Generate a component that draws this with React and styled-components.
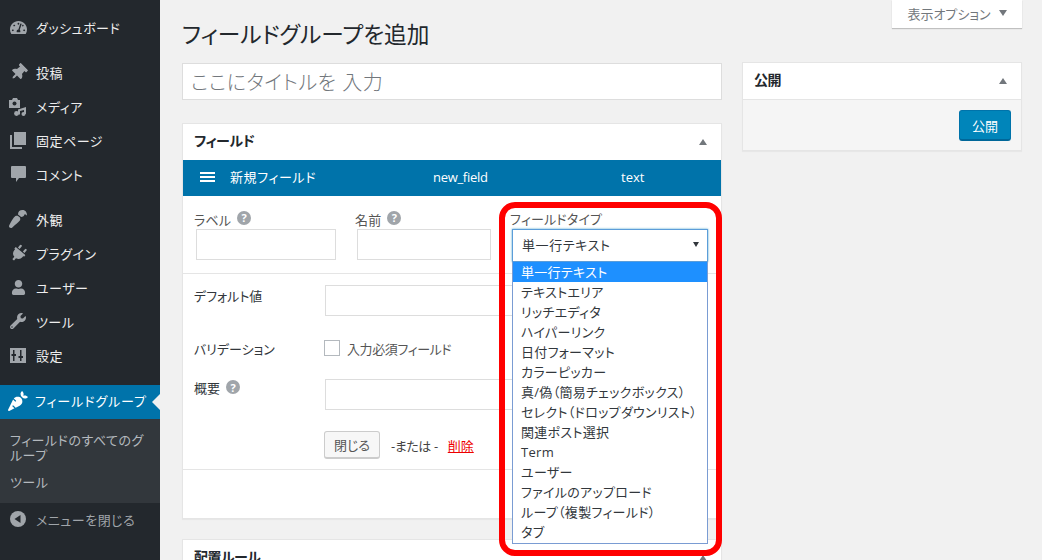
import React from "react";
import styled, { createGlobalStyle } from "styled-components";
import {
  FaTachometerAlt,
  FaThumbtack,
  FaPaintBrush,
  FaPlug,
  FaUser,
  FaWrench,
  FaCarrot,
} from "react-icons/fa";

const PinIcon = styled.span`
  display: flex;
  transform: rotate(45deg);
`;

const BrushIcon = styled.span`
  display: flex;
  transform: rotate(180deg);
`;

const PlugIcon = styled.span`
  display: flex;
  transform: rotate(40deg);
`;

const MediaIcon = () => (
  <svg width="19" height="19" viewBox="0 0 19 19" fill="currentColor">
    <path d="M0 3h3l1-2h4l1 2h2v8H0z" />
    <circle cx="5.5" cy="6.500" r="2" fill="#23282d" />
    <path d="M9 12.500l8-2.500v7h-2v-4l-4 1v3.500H9z" />
    <circle cx="7.500" cy="16.500" r="2.400" />
    <circle cx="14.500" cy="17" r="2" />
  </svg>
);

const PagesIcon = () => (
  <svg width="16" height="17" viewBox="0 0 16 17" fill="currentColor">
    <path d="M4 0h12v13H4z" />
    <path d="M2 3v12h10v2H0V3z" />
  </svg>
);

const CommentIcon = () => (
  <svg width="15" height="16" viewBox="0 0 15 16" fill="currentColor">
    <path d="M1 0h13a1 1 0 0 1 1 1v10a1 1 0 0 1-1 1H8l-3 4v-4H1a1 1 0 0 1-1-1V1a1 1 0 0 1 1-1z" />
  </svg>
);

const SettingsIcon = () => (
  <svg width="16" height="15" viewBox="0 0 16 15">
    <path fill="currentColor" d="M0 0h16v15H0z" />
    <path fill="#23282d" d="M3 2h1.500v4H6v2H4.500v5H3V8H1.500V6H3zM10 2h1.500v6H13v2h-1.500v3H10v-3H8.500V8H10z" />
  </svg>
);

const CollapseIcon = () => (
  <svg width="16" height="16" viewBox="0 0 16 16">
    <circle cx="8" cy="8" r="8" fill="currentColor" />
    <path fill="#23282d" d="M10.500 4v8L4.500 8z" />
  </svg>
);

const menuTop = [
  { label: "ダッシュボード", icon: <FaTachometerAlt size={17} /> },
];
const menuContent = [
  { label: "投稿", icon: <PinIcon><FaThumbtack size={17} /></PinIcon> },
  { label: "メディア", icon: <MediaIcon /> },
  { label: "固定ページ", icon: <PagesIcon /> },
  { label: "コメント", icon: <CommentIcon /> },
];
const menuAdmin = [
  { label: "外観", icon: <BrushIcon><FaPaintBrush size={18} /></BrushIcon> },
  { label: "プラグイン", icon: <PlugIcon><FaPlug size={17} /></PlugIcon> },
  { label: "ユーザー", icon: <FaUser size={15} /> },
  { label: "ツール", icon: <FaWrench size={16} /> },
  { label: "設定", icon: <SettingsIcon /> },
];

const fieldTypes = [
  "単一行テキスト",
  "テキストエリア",
  "リッチエディタ",
  "ハイパーリンク",
  "日付フォーマット",
  "カラーピッカー",
  "真/偽（簡易チェックボックス）",
  "セレクト（ドロップダウンリスト）",
  "関連ポスト選択",
  "Term",
  "ユーザー",
  "ファイルのアップロード",
  "ループ（複製フィールド）",
  "タブ",
];

function MenuGroup({ items }) {
  return (
    <MenuList>
      {items.map((item) => (
        <MenuItem key={item.label}>
          <MenuIcon>{item.icon}</MenuIcon>
          {item.label}
        </MenuItem>
      ))}
    </MenuList>
  );
}

export default function App() {
  return (
    <Page>
      <GlobalStyle />
      <Sidebar>
        <MenuGroup items={menuTop} />
        <MenuGroup items={menuContent} />
        <MenuGroup items={menuAdmin} />
        <ActiveItem>
          <MenuIcon>
            <FaCarrot size={20} />
          </MenuIcon>
          フィールドグループ
        </ActiveItem>
        <SubMenu>
          <SubItem>フィールドのすべてのグループ</SubItem>
          <SubItem>ツール</SubItem>
        </SubMenu>
        <CollapseRow>
          <MenuIcon>
            <CollapseIcon />
          </MenuIcon>
          メニューを閉じる
        </CollapseRow>
      </Sidebar>

      <Main>
        <ScreenOptions>
          表示オプション
          <Caret $down $inline />
        </ScreenOptions>
        <Columns>
          <Primary>
            <PageTitle>フィールドグループを追加</PageTitle>
            <TitleInput>ここにタイトルを 入力</TitleInput>

            <Card>
              <CardHead>
                フィールド
                <Caret />
              </CardHead>
              <FieldBar>
                <Burger>
                  <i />
                  <i />
                  <i />
                </Burger>
                <FieldName>新規フィールド</FieldName>
                <FieldSlug>new_field</FieldSlug>
                <span>text</span>
              </FieldBar>

              <TopRow>
                <LabelCol>
                  <SmallLabel>
                    ラベル <Help>?</Help>
                  </SmallLabel>
                  <TextBox />
                </LabelCol>
                <NameCol>
                  <SmallLabel>
                    名前 <Help>?</Help>
                  </SmallLabel>
                  <TextBox />
                </NameCol>
                <TypeCol>
                  <TypeLabel>フィールドタイプ</TypeLabel>
                  <SelectBox>
                    単一行テキスト
                    <SelectArrow />
                  </SelectBox>
                  <Options>
                    {fieldTypes.map((type, index) => (
                      <Option key={type} $selected={index === 0}>
                        {type}
                      </Option>
                    ))}
                  </Options>
                  <Ring />
                </TypeCol>
              </TopRow>

              <FormBlock>
                <FormRow>
                  <RowLabel>デフォルト値</RowLabel>
                  <WideBox />
                </FormRow>
                <CheckRow>
                  <RowLabel>バリデーション</RowLabel>
                  <CheckLabel>
                    <CheckBox />
                    入力必須フィールド
                  </CheckLabel>
                </CheckRow>
                <SummaryRow>
                  <SummaryLabel>
                    概要 <Help>?</Help>
                  </SummaryLabel>
                  <WideBox />
                </SummaryRow>
                <ActionRow>
                  <CloseButton>閉じる</CloseButton>
                  <OrText>-または -</OrText>
                  <DeleteLink>削除</DeleteLink>
                </ActionRow>
              </FormBlock>

              <CardFoot>
                <AddButton />
              </CardFoot>
            </Card>

            <Card>
              <CardHead>
                配置ルール
                <Caret />
              </CardHead>
            </Card>
          </Primary>

          <Secondary>
            <Card>
              <CardHead>
                公開
                <Caret />
              </CardHead>
              <PublishFoot>
                <PublishButton>公開</PublishButton>
              </PublishFoot>
            </Card>
          </Secondary>
        </Columns>
      </Main>
    </Page>
  );
}

const GlobalStyle = createGlobalStyle`
  html, body {
    margin: 0;
    height: 100%;
    overflow: hidden;
    background: #f1f1f1;
  }
  body {
    font-family: "Open Sans", "Noto Sans CJK JP", sans-serif;
    font-size: 13px;
    font-feature-settings: "palt";
    color: #32373c;
  }
`;

const Page = styled.div`
  display: flex;
  width: 1042px;
  height: 560px;
  overflow: hidden;
`;

const Sidebar = styled.nav`
  flex: none;
  width: 160px;
  height: 560px;
  padding-top: 11px;
  box-sizing: border-box;
  background: #23282d;
  color: #eee;
  letter-spacing: 0.5px;
`;

const MenuList = styled.div`
  margin-bottom: 11px;

  &:nth-child(3) {
    margin-bottom: 12px;
  }
`;

const MenuItem = styled.div`
  display: flex;
  align-items: center;
  height: 34px;
  padding: 0 0 2px 8px;
  box-sizing: border-box;
  font-size: 13px;
  white-space: nowrap;
`;

const MenuIcon = styled.span`
  display: flex;
  align-items: center;
  justify-content: center;
  flex: none;
  width: 20px;
  margin-right: 8px;
  color: #a0a5aa;
`;

const ActiveItem = styled(MenuItem)`
  position: relative;
  padding-bottom: 3px;
  background: #0073aa;
  color: #fff;
  letter-spacing: 0.9px;

  ${MenuIcon} {
    margin-right: 7px;
    color: #fff;
  }

  &::after {
    content: "";
    position: absolute;
    right: 0;
    top: 9px;
    border: 8px solid transparent;
    border-right-color: #f1f1f1;
    border-left-width: 0;
  }
`;

const SubMenu = styled.div`
  display: flex;
  flex-direction: column;
  gap: 12px;
  height: 84px;
  padding: 14px 12px 0 10px;
  box-sizing: border-box;
  background: #32373c;
  color: #b4b9be;
  font-size: 13px;
  line-height: 15px;
`;

const SubItem = styled.div``;

const CollapseRow = styled(MenuItem)`
  color: #a0a5aa;
`;

const Main = styled.main`
  position: relative;
  flex: 1;
  padding: 0 20px 0 22px;
`;

const ScreenOptions = styled.div`
  position: absolute;
  top: 0;
  right: 20px;
  display: flex;
  align-items: center;
  justify-content: center;
  gap: 8px;
  width: 130px;
  height: 28px;
  padding-bottom: 2px;
  box-sizing: border-box;
  background: #fff;
  box-shadow: 0 1px 1px rgba(0, 0, 0, 0.2);
  color: #72777c;
  font-size: 13px;
`;

const Caret = styled.span`
  position: ${(p) => (p.$inline ? "static" : "absolute")};
  right: 14px;
  top: 15px;
  width: 0;
  height: 0;
  border-left: 4px solid transparent;
  border-right: 4px solid transparent;
  border-bottom: ${(p) => (p.$down ? "0" : "6px solid #72777c")};
  border-top: ${(p) => (p.$down ? "6px solid #72777c" : "0")};
`;

const Columns = styled.div`
  display: flex;
  gap: 20px;
  align-items: flex-start;
`;

const Primary = styled.div`
  flex: none;
  width: 540px;
`;

const Secondary = styled.div`
  flex: none;
  width: 280px;
  padding-top: 62px;
`;

const PageTitle = styled.h1`
  height: 63px;
  margin: 0;
  padding-top: 20px;
  box-sizing: border-box;
  color: #23282d;
  font-size: 22.7px;
  font-weight: 400;
  line-height: 29px;
`;

const TitleInput = styled.div`
  display: flex;
  align-items: center;
  height: 37px;
  margin-bottom: 23px;
  padding-left: 8px;
  box-sizing: border-box;
  border: 1px solid #ddd;
  background: #fff;
  color: #72777c;
  font-size: 20px;
  font-weight: 300;
  letter-spacing: 0.5px;
`;

const Card = styled.section`
  margin-bottom: 20px;
  border: 1px solid #e5e5e5;
  background: #fff;
  box-shadow: 0 1px 1px rgba(0, 0, 0, 0.04);
`;

const CardHead = styled.h2`
  position: relative;
  display: flex;
  align-items: center;
  height: 36px;
  margin: 0;
  padding: 0 0 4px 11px;
  box-sizing: border-box;
  color: #23282d;
  font-size: 14px;
  font-weight: 700;
  letter-spacing: -0.5px;
`;

const FieldBar = styled.div`
  display: flex;
  align-items: center;
  height: 36px;
  padding: 0 0 3px 17px;
  box-sizing: border-box;
  background: #0073aa;
  color: #fff;
  font-size: 13px;
`;

const Burger = styled.span`
  display: flex;
  flex-direction: column;
  gap: 2px;
  width: 15px;
  margin-right: 15px;

  i {
    display: block;
    height: 2px;
    background: #fff;
  }
`;

const FieldName = styled.span`
  width: 203px;
  letter-spacing: 0.6px;
`;

const FieldSlug = styled.span`
  width: 188px;
  font-weight: 500;
  letter-spacing: -0.3px;
`;

const TopRow = styled.div`
  display: flex;
  height: 78px;
  padding: 12px 0 0 11px;
  box-sizing: border-box;
  border-bottom: 1px solid #e5e5e5;
`;

const LabelCol = styled.div`
  width: 161px;
  padding-top: 1px;
`;

const NameCol = styled(LabelCol)`
  width: 155px;
`;

const SmallLabel = styled.div`
  display: flex;
  align-items: center;
  gap: 6px;
  height: 20px;
  color: #555;
  font-size: 13px;
  letter-spacing: 0.2px;
`;

const Help = styled.span`
  display: inline-flex;
  align-items: center;
  justify-content: center;
  width: 14px;
  height: 14px;
  margin-top: -3px;
  border-radius: 50%;
  background: #a0a5aa;
  color: #fff;
  font-size: 11px;
  font-weight: 700;
  line-height: 1;
`;

const TextBox = styled.div`
  width: 140px;
  height: 31px;
  margin: 0 0 0 2px;
  box-sizing: border-box;
  border: 1px solid #ddd;
  background: #fff;

  ${NameCol} & {
    width: 134px;
  }
`;

const TypeCol = styled.div`
  position: relative;
  z-index: 2;
  width: 198px;
`;

const TypeLabel = styled.div`
  height: 20px;
  margin-top: 2px;
  color: #555;
  font-size: 13px;
  line-height: 18px;
  letter-spacing: 0.2px;
`;

const SelectBox = styled.div`
  position: relative;
  display: flex;
  align-items: center;
  height: 33px;
  margin: -1px 0 0 2px;
  padding: 0 0 2px 9px;
  box-sizing: border-box;
  border: 1px solid #5b9dd9;
  box-shadow: 0 0 2px rgba(30, 140, 190, 0.8);
  background: #fff;
  color: #32373c;
  letter-spacing: 0.6px;
`;

const SelectArrow = styled.span`
  position: absolute;
  right: 8px;
  top: 12px;
  border-left: 3px solid transparent;
  border-right: 3px solid transparent;
  border-top: 5px solid #32373c;
`;

const Options = styled.ul`
  position: absolute;
  left: 2px;
  top: 54px;
  width: 196px;
  margin: 0;
  padding: 0 0 1px;
  box-sizing: border-box;
  list-style: none;
  border: 1px solid #7a9cd3;
  border-top: 0;
  background: #fff;
`;

const Option = styled.li`
  height: 20px;
  padding-left: 8px;
  background: ${(p) => (p.$selected ? "#1e90ff" : "#fff")};
  color: ${(p) => (p.$selected ? "#fff" : "#32373c")};
  font-size: 13px;
  line-height: 20px;
  letter-spacing: 0.3px;
  white-space: nowrap;
`;

const Ring = styled.div`
  position: absolute;
  left: -11px;
  top: -6px;
  width: 223px;
  height: 354px;
  box-sizing: border-box;
  border: 6px solid #f00;
  border-radius: 16px;
  pointer-events: none;
`;

const FormBlock = styled.div`
  padding: 11px 0 0 11px;
  height: 196px;
  box-sizing: border-box;
  border-bottom: 1px solid #e5e5e5;
`;

const FormRow = styled.div`
  display: flex;
  align-items: flex-start;
`;

const RowLabel = styled.div`
  display: flex;
  align-items: center;
  gap: 6px;
  flex: none;
  width: 131px;
  height: 20px;
  color: #32373c;
  font-size: 13px;
`;

const SummaryLabel = styled(RowLabel)`
  margin-top: -2px;

  ${Help} {
    margin-top: 0;
  }
`;

const WideBox = styled.div`
  width: 375px;
  height: 31px;
  box-sizing: border-box;
  border: 1px solid #ddd;
  background: #fff;
`;

const CheckRow = styled(FormRow)`
  align-items: center;
  margin-top: 22px;
`;

const CheckLabel = styled.div`
  display: flex;
  align-items: center;
  gap: 7px;
  margin-left: -1px;
  color: #555;
  letter-spacing: -0.4px;
`;

const CheckBox = styled.span`
  width: 16px;
  height: 16px;
  box-sizing: border-box;
  border: 1px solid #b4b9be;
  background: #fff;
`;

const SummaryRow = styled(FormRow)`
  margin-top: 21px;
`;

const ActionRow = styled.div`
  display: flex;
  align-items: center;
  height: 28px;
  margin: 21px 0 0 130px;
`;

const CloseButton = styled.div`
  display: flex;
  align-items: center;
  justify-content: center;
  width: 56px;
  height: 28px;
  box-sizing: border-box;
  border: 1px solid #ccc;
  border-bottom-width: 2px;
  border-radius: 3px;
  background: #f7f7f7;
  color: #555;
`;

const OrText = styled.span`
  margin: 0 10px 0 11px;
  color: #444;
  letter-spacing: -0.4px;
`;

const DeleteLink = styled.span`
  color: #e00;
  text-decoration: underline;
`;

const CardFoot = styled.div`
  display: flex;
  justify-content: flex-end;
  height: 48px;
  padding: 12px 13px 0 0;
  box-sizing: border-box;
`;

const AddButton = styled.div`
  width: 40px;
  height: 27px;
  border-radius: 3px;
  background: #0085ba;
`;

const PublishFoot = styled.div`
  display: flex;
  justify-content: flex-end;
  height: 51px;
  padding: 10px 10px 0 0;
  box-sizing: border-box;
  border-top: 1px solid #e5e5e5;
  background: #f5f5f5;
`;

const PublishButton = styled.div`
  display: flex;
  align-items: center;
  justify-content: center;
  width: 52px;
  height: 31px;
  box-sizing: border-box;
  border: 1px solid #0073aa;
  border-bottom: 2px solid #006799;
  border-radius: 3px;
  background: #0085ba;
  color: #fff;
  font-size: 13px;
`;
